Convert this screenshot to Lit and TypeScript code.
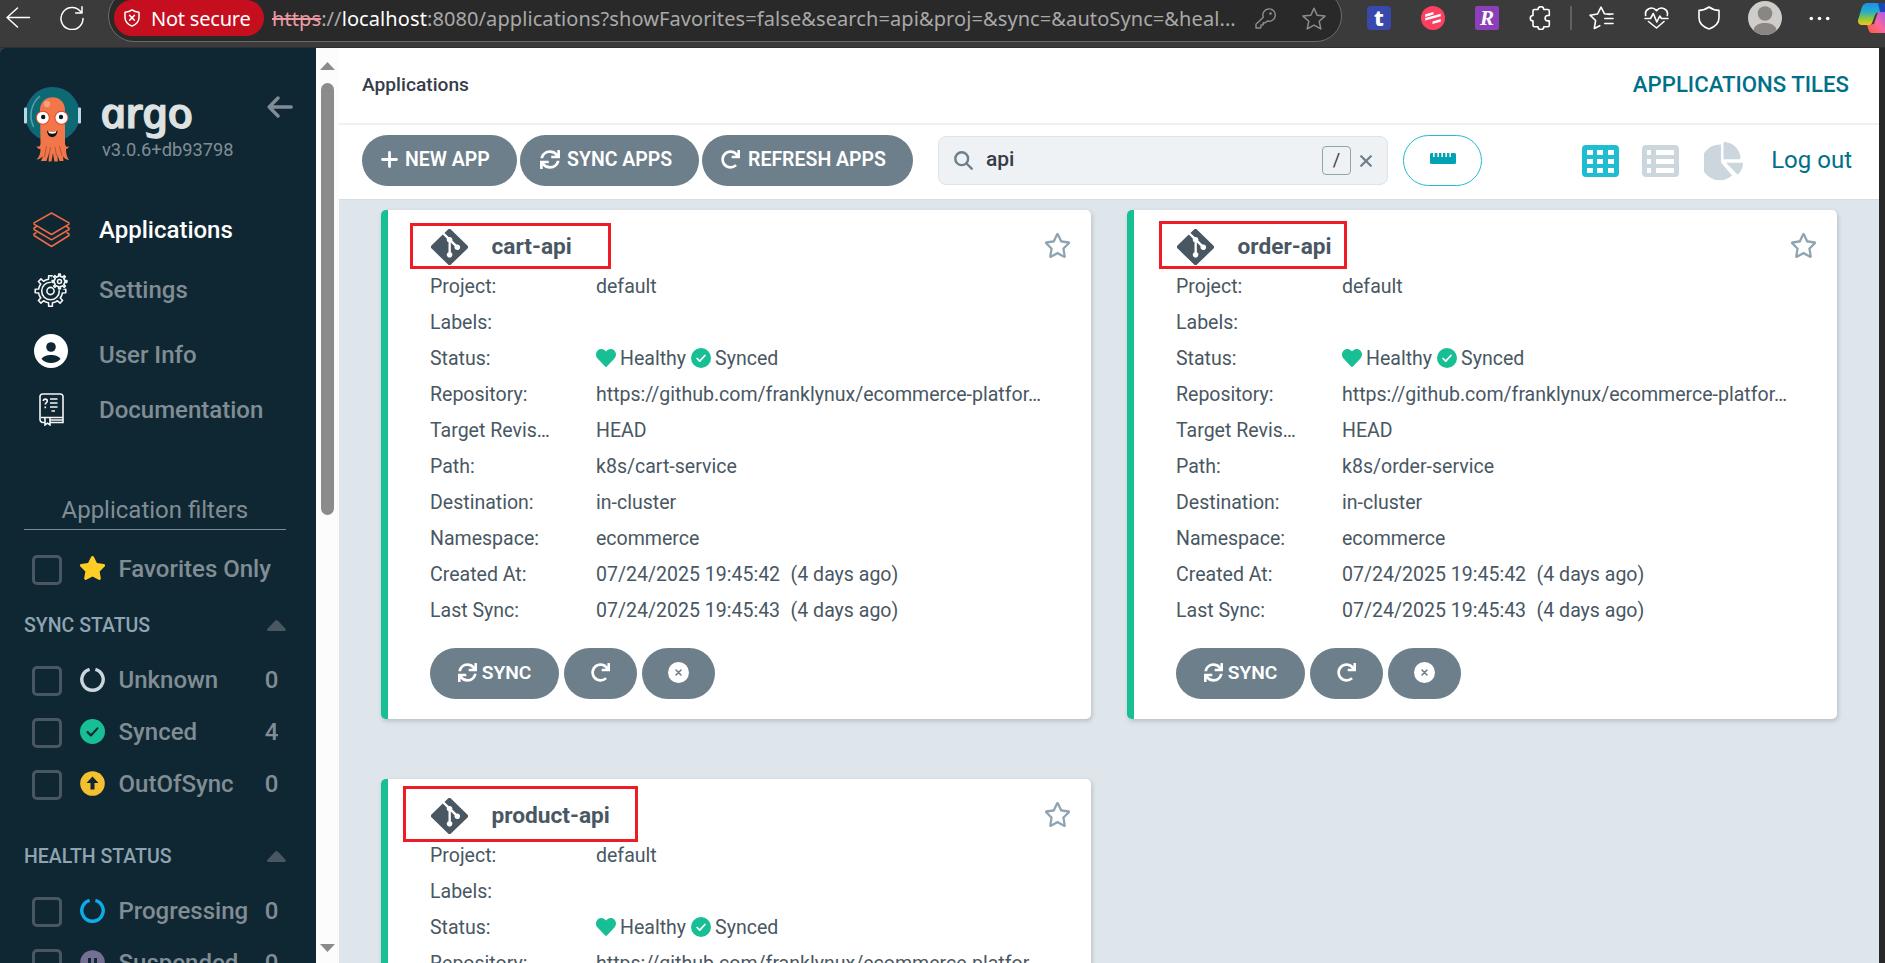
import { LitElement, html, css, nothing } from "lit";
import { customElement, property } from "lit/decorators.js";

const P = {
  sync: "M440.65 12.57l4 82.77A247.16 247.16 0 0 0 255.83 8C134.73 8 33.91 94.92 12.29 209.82A12 12 0 0 0 24.09 224h49.05a12 12 0 0 0 11.67-9.26 175.91 175.91 0 0 1 317-56.94l-101.46-4.86a12 12 0 0 0-12.57 12v47.41a12 12 0 0 0 12 12H500a12 12 0 0 0 12-12V12a12 12 0 0 0-12-12h-47.37a12 12 0 0 0-11.98 12.57zM255.83 432a175.61 175.61 0 0 1-146-77.8l101.8 4.87a12 12 0 0 0 12.57-12v-47.4a12 12 0 0 0-12-12H12a12 12 0 0 0-12 12V500a12 12 0 0 0 12 12h47.35a12 12 0 0 0 12-12.6l-4.15-82.57A247.17 247.17 0 0 0 255.83 504c121.11 0 221.93-86.92 243.55-201.82a12 12 0 0 0-11.8-14.18h-49.05a12 12 0 0 0-11.67 9.26A175.86 175.86 0 0 1 255.83 432z",
  redo: "M500.33 0h-47.41a12 12 0 0 0-12 12.57l4 82.76A247.42 247.42 0 0 0 256 8C119.34 8 7.9 119.53 8 256.19 8.1 393.07 119.1 504 256 504a247.1 247.1 0 0 0 166.18-63.91 12 12 0 0 0 .48-17.43l-34-34a12 12 0 0 0-16.38-.55A176 176 0 1 1 402.1 157.8l-101.53-4.87a12 12 0 0 0-12.57 12v47.41a12 12 0 0 0 12 12h200.33a12 12 0 0 0 12-12V12a12 12 0 0 0-12-12z",
  heart: "M462.3 62.6C407.5 15.9 326 24.3 275.7 76.2L256 96.5l-19.7-20.3C186.1 24.3 104.5 15.9 49.7 62.6c-62.8 53.6-66.1 149.8-9.9 207.9l193.5 199.8c12.5 12.9 32.8 12.9 45.3 0l193.5-199.8c56.3-58.1 53-154.3-9.8-207.9z",
  star: "M259.3 17.8L194 150.2 47.9 171.5c-26.2 3.8-36.7 36.1-17.7 54.6l105.7 103-25 145.5c-4.5 26.3 23.2 46 46.4 33.7L288 439.6l130.7 68.7c23.2 12.2 50.9-7.4 46.4-33.7l-25-145.5 105.7-103c19-18.5 8.5-50.8-17.7-54.6L382 150.2 316.7 17.8c-11.7-23.6-45.6-23.9-57.4 0z",
  starOutline: "M528.1 171.5L382 150.2 316.7 17.8c-11.7-23.6-45.6-23.9-57.4 0L194 150.2 47.9 171.5c-26.2 3.8-36.7 36.1-17.7 54.6l105.7 103-25 145.5c-4.5 26.3 23.2 46 46.4 33.7L288 439.6l130.7 68.7c23.2 12.2 50.9-7.4 46.4-33.7l-25-145.5 105.7-103c19-18.5 8.5-50.8-17.7-54.6zM388.6 312.3l23.7 138.4L288 385.4l-124.3 65.3 23.7-138.4-100.6-98 139-20.2 62.2-126 62.2 126 139 20.2-100.6 98z",
  git: "M439.55 236.05L244 40.45a28.87 28.87 0 0 0-40.81 0l-40.66 40.63 51.52 51.52c27.06-9.14 52.68 16.77 43.39 43.68l49.66 49.66c34.23-11.8 61.18 31 35.47 56.69-26.49 26.49-70.21-2.87-56-37.34L240.22 199v121.85c25.3 12.54 22.26 41.85 9.08 55a34.34 34.34 0 0 1-48.55 0c-17.57-17.6-11.07-46.91 11.25-56v-123c-20.8-8.51-24.6-30.74-18.64-45L142.57 101 8.45 235.14a28.86 28.86 0 0 0 0 40.81l195.61 195.6a28.86 28.86 0 0 0 40.8 0l194.69-194.69a28.86 28.86 0 0 0 0-40.81z",
};

const glyph = (d: string, w: number, h: number, box = "0 0 512 512") =>
  html`<svg width=${w} height=${h} viewBox=${box} preserveAspectRatio="none" fill="currentColor"><path d=${d}></path></svg>`;

const cogTeeth = (cx: number, cy: number, r: number, R: number, n: number) => {
  const pts: string[] = [];
  for (let i = 0; i < n; i++) {
    const a = (i / n) * Math.PI * 2 - Math.PI / 2;
    const s = Math.PI / n;
    for (const [k, rad] of [[-0.85, r], [-0.42, r], [-0.3, R], [0.3, R], [0.42, r], [0.85, r]]) {
      pts.push(`${(cx + Math.cos(a + k * s) * rad).toFixed(2)} ${(cy + Math.sin(a + k * s) * rad).toFixed(2)}`);
    }
  }
  return "M" + pts.join("L") + "z";
};

const checkCircle = (s: number, mark: string) => html`<svg width=${s} height=${s} viewBox="0 0 24 24">
  <circle cx="12" cy="12" r="12" fill="#18be94"></circle>
  <path d="M7.3 12.6l3.2 3.2 6.2-6.8" fill="none" stroke=${mark} stroke-width="2.1" stroke-linecap="round" stroke-linejoin="round"></path></svg>`;

const ring = (c: string) => html`<svg width="25" height="25" viewBox="0 0 25 25" fill="none">
  <path d="M15.4 2.300a10.700 10.700 0 1 1-5.800 0" stroke=${c} stroke-width="3.400" stroke-linecap="butt"></path></svg>`;

@customElement("browser-bar")
class BrowserBar extends LitElement {
  static styles = css`
    :host { display: flex; height: 48px; background: #3b3b3b; color: #fff; align-items: flex-start; overflow: hidden; box-sizing: border-box; border-bottom: 1px solid #312f31; font-family: "Noto Sans", "Open Sans", sans-serif; }
    svg { display: block; flex: none; }
    .back { margin: 7px 0 0 6px; }
    .reload { margin: 6px 0 0 29px; }
    .pill { margin: -10px 0 0 24px; width: 1234px; height: 52px; box-sizing: border-box; border: 1.5px solid #6c6c6c; border-radius: 26px; background: #292929; display: flex; align-items: center; padding: 4px 12px 0 5px; flex: none; }
    .warn { width: 150px; height: 36px; border-radius: 18px; background: #c50f1f; display: flex; align-items: center; padding-left: 10px; box-sizing: border-box; flex: none; }
    .warn span { margin-left: 11px; font-size: 20px; letter-spacing: -0.22px; white-space: nowrap; }
    .url { margin: 0 0 0 8px; width: 968px; font-size: 20px; letter-spacing: 0.09px; color: #a9a9a9; white-space: nowrap; overflow: hidden; flex: none; }
    .url b { font-weight: 400; color: #fff; }
    .url s { color: #ec9aa2; text-decoration-thickness: 2px; }
    .key { margin: 0 0 0 15px; }
    .fav { margin: 0 0 0 26px; }
    .ext { width: 24px; height: 24px; margin-top: 6px; border-radius: 4px; text-align: center; font-weight: 800; flex: none; font-size: 22px; line-height: 22px; }
    .t { background: #3949ab; margin-left: 25px; }
    .r { background: #8b3fb8; margin-left: 30px; border-radius: 2px; font-family: "Liberation Serif", serif; font-style: italic; font-size: 21px; line-height: 24px; }
    .red { margin: 6px 0 0 30px; }
    .puzzle { margin: 6px 0 0 30px; }
    .sep { width: 2px; height: 24px; margin: 6px 0 0 18px; background: #606060; flex: none; }
    .list { margin: 6px 0 0 17px; }
    .heart { margin: 6px 0 0 30px; }
    .shield { margin: 6px 0 0 29px; }
    .avatar { margin: 1px 0 0 28px; }
    .dots { margin: 16px 0 0 27px; }
    .pilot { margin: 3px 0 0 28px; }
  `;
  render() {
    return html`
      <svg class="back" width="25" height="21" viewBox="0 0 25 21" fill="none" stroke="#fff" stroke-width="1.5" stroke-linecap="round"><path d="M23.5 10.5H1M11.5 1L1 10.5l10.500 9.500"></path></svg>
      <svg class="reload" width="24" height="24" viewBox="0 0 24 24" fill="none" stroke="#fff" stroke-width="1.5" stroke-linecap="round"><path d="M22 7V.8M22 7h-6.300M21.500 7A11 11 0 1 0 23 12.500"></path></svg>
      <div class="pill">
        <div class="warn">
          <svg width="16" height="18" viewBox="0 0 16 18" fill="none" stroke="#fff" stroke-width="1.5" stroke-linejoin="round" stroke-linecap="round"><path d="M8 .9c2 1.600 4.300 2.300 7 2.400v5.200c0 4-2.500 6.800-7 8.600-4.500-1.800-7-4.600-7-8.600V3.300C3.700 3.200 6 2.500 8 .9zM5.600 6.400l4.800 4.800M10.400 6.400l-4.800 4.800"></path></svg>
          <span>Not secure</span>
        </div>
        <div class="url"><s>https</s>://<b>localhost</b>:8080/applications?showFavorites=false&amp;search=api&amp;proj=&amp;sync=&amp;autoSync=&amp;heal...</div>
        <svg class="key" width="21" height="21" viewBox="0 0 21 21" fill="none" stroke="#8d8d8d" stroke-width="1.400" stroke-linejoin="round"><path d="M8.300 9.300A6.200 6.200 0 1 1 12.200 13L10.400 14.700H8.200v2.200H6v2.300l-.8.8H1v-3.700z"></path><circle cx="15.500" cy="5.500" r="1.300" fill="#8d8d8d" stroke="none"></circle></svg>
        <svg class="fav" width="24" height="23" viewBox="0 0 24 23" fill="none" stroke="#8d8d8d" stroke-width="1.500" stroke-linejoin="round"><path d="M12 1.200l3.200 7 7.800.9-5.800 5.200 1.600 7.600L12 18.200l-6.800 3.700 1.600-7.600L1 9.100l7.800-.9z"></path></svg>
      </div>
      <div class="ext t">t</div>
      <svg class="red" width="24" height="24" viewBox="0 0 24 24"><circle cx="12" cy="12" r="12" fill="#fd3f62"></circle><path d="M4.200 10.900v-2.600L12.500 6v2.600zM4.200 14.600V12L19.800 7.700v2.600zM11.500 18V15.400l8.300-2.300v2.600z" fill="#fff"></path></svg>
      <div class="ext r">R</div>
      <svg class="puzzle" width="23" height="24" viewBox="0 0 23 24" fill="none" stroke="#fff" stroke-width="1.600" stroke-linejoin="round"><path d="M9 3.500a2.900 2.900 0 0 1 5.800 0h4a1.500 1.500 0 0 1 1.500 1.500v4.500h-1.500a2.700 2.700 0 0 0 0 5.400h1.500v4.300a1.500 1.500 0 0 1-1.500 1.500h-4a2.900 2.900 0 0 1-5.800 0H5.500A1.500 1.500 0 0 1 4 19.200v-4.300a2.700 2.700 0 0 1 0-5.400V5a1.500 1.500 0 0 1 1.500-1.500z"></path></svg>
      <div class="sep"></div>
      <svg class="list" width="25" height="24" viewBox="0 0 25 24" fill="none" stroke="#fff" stroke-width="1.600" stroke-linejoin="round" stroke-linecap="round"><path d="M21 8.500l-5.500-.7L12 1.200 8.600 8 1 9.200l5.600 5.300-1.300 8 5.500-2.800M15.800 12.500H24M15.800 17.500H24M18.500 8H24"></path></svg>
      <svg class="heart" width="25" height="24" viewBox="0 0 25 24" fill="none" stroke="#fff" stroke-width="1.600" stroke-linejoin="round" stroke-linecap="round"><path d="M1.700 9.500C.2 3 8-.5 12.500 4.600 17-.5 24.800 3 23.300 9.500M1 12.500h5.500l2.800-5 3.500 8.500 3-6 1.600 2.500H24M4.500 15.500l8 6.500 7.500-6.500"></path></svg>
      <svg class="shield" width="22" height="24" viewBox="0 0 22 24" fill="none" stroke="#fff" stroke-width="1.600" stroke-linejoin="round"><path d="M11 1c3 2.300 6.200 3.300 10 3.400v7.300c0 5.300-3.500 8.900-10 11.300C4.500 20.600 1 17 1 11.700V4.400C4.800 4.300 8 3.300 11 1z"></path></svg>
      <svg class="avatar" width="34" height="34" viewBox="0 0 34 34"><circle cx="17" cy="17" r="17" fill="#cfcdca"></circle><circle cx="17" cy="12.500" r="7.300" fill="#8a8683"></circle><path d="M5.500 29.500C6 24.500 10.500 22 17 22s11 2.500 11.500 7.500A17 17 0 0 1 5.500 29.500z" fill="#8a8683"></path></svg>
      <svg class="dots" width="21" height="5" viewBox="0 0 21 5" fill="#fff"><circle cx="2.300" cy="2.500" r="1.800"></circle><circle cx="10.500" cy="2.500" r="1.800"></circle><circle cx="18.700" cy="2.500" r="1.800"></circle></svg>
      <svg class="pilot" width="36" height="31" viewBox="0 0 36 31">
        <defs><linearGradient id="a" x1="0" y1="0" x2="0" y2="1"><stop offset="0" stop-color="#1f8fe8"></stop><stop offset=".4" stop-color="#22b0c8"></stop><stop offset=".7" stop-color="#8cc63f"></stop><stop offset="1" stop-color="#f6c416"></stop></linearGradient>
        <linearGradient id="b" x1="0" y1="1" x2="1" y2="0"><stop offset="0" stop-color="#ff5a2b"></stop><stop offset=".5" stop-color="#f768a0"></stop><stop offset="1" stop-color="#a855f7"></stop></linearGradient></defs>
        <path d="M9 22l2 6a3 3 0 0 0 3 2h14V8l-8 1-4 12z" fill="url(#b)"></path>
        <path d="M19 0h7l3 9h-7a5 5 0 0 0-5 3l-3 8a3 3 0 0 1-3 2H4a4 4 0 0 1-4-5L4 4a6 6 0 0 1 5-4z" fill="url(#a)"></path>
        <path d="M20 0h6l3 9h-7z" fill="#1849b8"></path>
      </svg>`;
  }
}

@customElement("side-nav")
class SideNav extends LitElement {
  static styles = css`
    :host { display: block; width: 316px; height: 915px; flex: none; background: #0f2733; color: #818d94; box-sizing: border-box; padding: 38px 30px 0 24px; overflow: hidden; border-top-left-radius: 6px; font-weight: 500; font-size: 24px; white-space: nowrap; }
    svg { display: block; flex: none; }
    .brand { display: flex; height: 114px; align-items: flex-start; }
    .words { margin-left: 20px; width: 133px; }
    .argo { font: italic 500 42px/50px "Noto Sans", sans-serif; letter-spacing: -1px; color: #dee2e1; -webkit-text-stroke: 1.2px #dee2e1; height: 50px; margin-top: 1px; transform: scaleX(1.08) skewX(12deg); transform-origin: 0 38px; }
    .ver { font-size: 18.3px; font-weight: 400; line-height: 25px; }
    .collapse { margin: 10px 0 0 33px; }
    .item { display: grid; grid-template-columns: 75px auto; align-items: center; }
    .ic { display: flex; justify-content: center; width: 37px; }
    .ic svg { margin-left: 17px; }
    .r60 { height: 60px; }
    .r69 { height: 69px; }
    .r69 .ic { margin-bottom: 8px; }
    .r41 { height: 41px; }
    .on { color: #fff; }
    .title { margin-top: 59px; height: 40px; line-height: 42px; padding-left: 37.500px; border-bottom: 1px solid #7d8b93; font-weight: 400; }
    .row { display: flex; align-items: center; height: 52px; padding: 0 8px; }
    .box { width: 30px; height: 30px; box-sizing: border-box; border: 3px solid #495763; border-radius: 5px; margin-right: 18px; flex: none; }
    .row .m { width: 25px; margin: 0 13.500px 4px 0; }
    .row .n { flex: 1; margin-bottom: 3px; }
    .row .c { margin-bottom: 3px; margin-right: -.5px; }
    .first { margin-top: 14px; }
    .head { display: flex; justify-content: space-between; align-items: center; height: 30px; font-size: 19.5px; color: #8fa4b1; }
    .head span { margin-top: 1px; }
    .h1 { margin: 14px 0 15px; }
    .h2 { margin: 30px 0 15px; }
  `;
  row(icon: unknown, name: string, count?: number) {
    return html`<div class="row ${count === undefined ? "first" : ""}"><span class="box"></span><span class="m">${icon}</span><span class="n">${name}</span>${count === undefined ? nothing : html`<span class="c">${count}</span>`}</div>`;
  }
  head(name: string, cls: string) {
    return html`<div class="head ${cls}"><span>${name}</span><svg width="19" height="11" viewBox="0 0 19 11" fill="#495763"><path d="M8.300.6a1.700 1.700 0 0 1 2.400 0l7.800 8.200c.9 1 .3 2.200-.9 2.200H1.400C.2 11-.4 9.800.5 8.800z"></path></svg></div>`;
  }
  render() {
    return html`
      <div class="brand">
        <svg width="58" height="77" viewBox="0 0 58 77">
          <circle cx="28.500" cy="28.500" r="26.800" fill="#0b6a74" stroke="#1f5f7c" stroke-width="1.200"></circle>
          <rect x="0" y="21.500" width="3" height="16" rx="1" fill="#b9d6ea"></rect><rect x="54" y="21.500" width="3" height="16" rx="1" fill="#b9d6ea"></rect>
          <path d="M15.500 10.500C7 18 4.500 30 9.500 40.500" fill="none" stroke="#5fa0a6" stroke-width="1.500" stroke-linecap="round"></path>
          <path d="M16 24c0-17 25-17 25 0v34c1.500 4 2.500 3 4 2-.5 2-1.500 3-3 3 0 5 1 8 3 11-3-.3-5-2-6-4l.5 5h-4l-2-6 .3 6.500h-3.500L29 67l-1.500 8.500h-3L25 67l-2.500 8H17l2-5c-2 2.500-4.500 3.500-6.500 3.500 3-3 4-6 4-10.500-2 .3-3.500-1-4-3 2 1 3.500 1 4-2z" fill="#f1764a"></path>
          <path d="M22.500 60l-2 11M26.500 61l-1.500 9M31 61l1.500 9M35.500 60l2.500 10" stroke="#b94c30" stroke-width=".9" fill="none"></path>
          <ellipse cx="23" cy="18" rx="3" ry="3.200" fill="#f9a183"></ellipse>
          <circle cx="18.800" cy="31.700" r="7" fill="#e3472b"></circle><circle cx="37.500" cy="31.700" r="7" fill="#e3472b"></circle>
          <circle cx="18.800" cy="31.700" r="6" fill="#fff"></circle><circle cx="37.500" cy="31.700" r="6" fill="#fff"></circle>
          <circle cx="19.200" cy="31" r="2.200" fill="#101820"></circle><circle cx="37" cy="31" r="2.200" fill="#101820"></circle>
          <path d="M23 44.500c3.300 2.200 7.500 2.200 10.500 0-.3 4.500-2.500 6.500-5.300 6.500S23.300 49 23 44.500z" fill="#131313"></path><path d="M24.300 45.100c2.800 1.200 5.500 1.200 8 0l-.6 2c-2.200.9-4.800.9-6.800 0z" fill="#fff"></path>
        </svg>
        <div class="words"><div class="argo">argo</div><div class="ver">v3.0.6+db93798</div></div>
        <svg class="collapse" width="26" height="22" viewBox="0 0 26 22" fill="none" stroke="#818d94" stroke-width="3.400" stroke-linecap="round" stroke-linejoin="round"><path d="M24.200 11H2.200M11 2L2.200 11l8.800 9"></path></svg>
      </div>
      <div class="item r60 on"><span class="ic"><svg width="37" height="36" viewBox="0 0 37 36" fill="none" stroke="#ef6b43" stroke-width="1.500" stroke-linejoin="round"><path d="M18.500 1L36 10.800v1.400L18.500 22.500 1 12.200v-1.400zM3.500 14.500L1 16v1.500l17.500 10.300L36 17.500V16l-2.500-1.500M3.500 20.500L1 22v1.500L18.500 34.500 36 23.500V22l-2.500-1.500"></path></svg></span><span>Applications</span></div>
      <div class="item r60"><span class="ic"><svg width="34" height="34" viewBox="0 0 34 34" fill="none" stroke="#f4f6f7" stroke-width="1.600" stroke-linejoin="round"><path d=${cogTeeth(16.5, 18, 12, 15.400, 8)}></path><circle cx="16.500" cy="18" r="8.800"></circle><circle cx="16.500" cy="18" r="3.600"></circle><circle cx="25.500" cy="8.500" r="8.800" fill="#0f2733" stroke="none"></circle><path d=${cogTeeth(25.5, 8.5, 5.2, 7.4, 8)}></path><circle cx="25.500" cy="8.500" r="2"></circle></svg></span><span>Settings</span></div>
      <div class="item r69"><span class="ic"><svg width="34" height="34" viewBox="0 0 34 34"><circle cx="17" cy="17" r="17" fill="#fff"></circle><circle cx="17" cy="13" r="4.800" fill="#0f2733"></circle><path d="M7.500 25c3-5.300 16-5.300 19 0-4.500 5.300-14.500 5.300-19 0z" fill="#0f2733"></path></svg></span><span>User Info</span></div>
      <div class="item r41"><span class="ic"><svg width="25" height="33" viewBox="0 0 25 33" fill="none" stroke="#f4f6f7" stroke-width="1.600"><path d="M6 29.500H4a3 3 0 0 1-3-3V3.500A2.500 2.500 0 0 1 3.500 1h18A2.500 2.500 0 0 1 24 3.500V29.500H11M2 24.500h22M11 27h13M6 25v7l2.500-1.800L11 32v-7M11 6h7.500M11 10h7.500M11 14h7.500M12.500 18H16M4.300 8c.2-2.500 4-2.500 4 0 0 1.700-2 1.700-2 3.500M6.300 13.500v1.800"></path></svg></span><span>Documentation</span></div>
      <div class="title">Application filters</div>
      ${this.row(html`<svg width="25" height="24" viewBox="22 0 532 512" preserveAspectRatio="none" fill="#ffce25"><path d=${P.star}></path></svg>`, "Favorites Only")}
      ${this.head("SYNC STATUS", "h1")}
      ${this.row(ring("#ccd6dd"), "Unknown", 0)}
      ${this.row(checkCircle(25, "#0f2733"), "Synced", 4)}
      ${this.row(html`<svg width="25" height="25" viewBox="0 0 25 25"><circle cx="12.500" cy="12.500" r="12.300" fill="#f4c030"></circle><path d="M12.500 5.500l6 6.500h-4v6.500h-4V12h-4z" fill="#0f2733"></path></svg>`, "OutOfSync", 0)}
      ${this.head("HEALTH STATUS", "h2")}
      ${this.row(ring("#0dadea"), "Progressing", 0)}
      ${this.row(html`<svg width="25" height="25" viewBox="0 0 25 25"><circle cx="12.500" cy="12.500" r="12.300" fill="#766f94"></circle><path d="M8 8h3v9H8zM14 8h3v9h-3z" fill="#0f2733"></path></svg>`, "Suspended", 0)}
    `;
  }
}

@customElement("app-tile")
class AppTile extends LitElement {
  @property() name = "";
  @property() path = "";
  @property() mark = "";
  static styles = css`
    :host { display: block; position: relative; height: 509px; box-sizing: border-box; background: #fff; border-left: 7px solid #18be94; border-radius: 5px; box-shadow: 1px 2px 4px rgba(60, 80, 90, .25); padding: 18px 21px 0 42px; font-size: 19.55px; color: #495763; white-space: nowrap; }
    svg { display: block; flex: none; }
    .top { display: flex; align-items: center; height: 37px; padding-left: 1px; }
    .name { margin-left: 23.500px; font-size: 22.7px; font-weight: 700; flex: 1; }
    .fav { color: #8fa4b1; margin-bottom: 2px; }
    .info { display: grid; grid-template-columns: 166px 1fr; grid-auto-rows: 36px; align-items: center; margin-top: 3px; }
    .info span { min-width: 0; }
    .status { display: flex; align-items: center; }
    .status .h { margin-right: 4px; color: #18be94; }
    .status .s { margin: 0 4px 0 5px; }
    .ago { margin-left: 10.500px; }
    .btns { display: flex; gap: 5px; margin-top: 20px; font-size: 19.2px; }
    .btn { height: 51px; width: 73px; border-radius: 25.500px; background: #6d7f8b; color: #fff; display: flex; align-items: center; justify-content: center; font-weight: 600; padding-bottom: 3px; box-sizing: border-box; }
    .wide { width: 129px; gap: 5px; }
    .mark { position: absolute; box-sizing: border-box; border: 3px solid #ee1c25; }
    .cart { left: 22px; top: 13px; width: 201px; height: 46px; }
    .order { left: 25px; top: 11px; width: 188px; height: 48px; }
    .product { left: 15px; top: 7px; width: 235px; height: 56px; }
  `;
  render() {
    const f = (k: string, v: unknown) => html`<span>${k}</span><span>${v}</span>`;
    return html`
      <div class="top">
        ${glyph(P.git, 37, 36, "0 32 448 448")}
        <span class="name">${this.name}</span>
        <span class="fav">${glyph(P.starOutline, 25, 25, "22 0 532 512")}</span>
      </div>
      <div class="info">
        ${f("Project:", "default")}
        ${f("Labels:", "")}
        ${f("Status:", html`<span class="status"><span class="h">${glyph(P.heart, 20, 18, "0 32 512 448")}</span>Healthy<span class="s">${checkCircle(20, "#fff")}</span>Synced</span>`)}
        ${f("Repository:", "https://github.com/franklynux/ecommerce-platfor…")}
        ${f("Target Revis…", "HEAD")}
        ${f("Path:", this.path)}
        ${f("Destination:", "in-cluster")}
        ${f("Namespace:", "ecommerce")}
        ${f("Created At:", html`07/24/2025 19:45:42<span class="ago">(4 days ago)</span>`)}
        ${f("Last Sync:", html`07/24/2025 19:45:43<span class="ago">(4 days ago)</span>`)}
      </div>
      <div class="btns">
        <div class="btn wide">${glyph(P.sync, 19, 19)}SYNC</div>
        <div class="btn">${glyph(P.redo, 19, 19)}</div>
        <div class="btn"><svg width="21" height="21" viewBox="0 0 21 21"><circle cx="10.500" cy="10.500" r="10.500" fill="#fff"></circle><path d="M8 8l5 5M13 8l-5 5" stroke="#6d7f8b" stroke-width="1.600" stroke-linecap="round"></path></svg></div>
      </div>
      <div class="mark ${this.mark}"></div>`;
  }
}

@customElement("app-root")
class AppRoot extends LitElement {
  static styles = css`
    :host { display: block; height: 963px; overflow: hidden; background: #3b3b3b; font-family: Roboto, sans-serif; }
    svg { display: block; flex: none; }
    .page { display: flex; height: 915px; overflow: hidden; }
    .scroll { width: 23px; flex: none; background: #fcfcfc; display: flex; flex-direction: column; align-items: center; padding: 14px 0 11px; box-sizing: border-box; }
    .thumb { width: 13px; height: 432px; border-radius: 7px; background: #8b8b8b; margin: 13px 0 auto; }
    .main { width: 1540px; flex: none; display: flex; flex-direction: column; background: #dee5eb; }
    .edge { flex: 1; background: #292829; }
    .crumbs { height: 77px; box-sizing: border-box; background: #fff; border-bottom: 2px solid #edf1f5; display: flex; justify-content: space-between; align-items: center; padding: 0 30px 3px 23px; font-size: 19.200px; font-weight: 500; color: #363c4a; flex: none; }
    .view { color: #00708a; font-size: 22.200px; }
    .tools { height: 74px; box-sizing: border-box; background: #fff; display: flex; align-items: center; padding: 0 27px 3px 23px; flex: none; }
    .btn { height: 51px; box-sizing: border-box; border-radius: 25.500px; background: #6d7f8b; color: #fff; display: flex; align-items: center; padding: 0 0 3px 19px; font-size: 19.500px; font-weight: 600; gap: 8px; margin-right: 3px; flex: none; white-space: nowrap; }
    .b1 { width: 155px; gap: 7px; } .b2 { width: 179px; gap: 7px; padding-left: 20px; } .b3 { width: 211px; }
    .search { width: 450px; height: 49px; margin-left: 22px; box-sizing: border-box; border: 1px solid #dde4ea; border-radius: 8px; background: #eef2f5; display: flex; align-items: center; padding: 0 15px 0 15px; color: #363c4a; font-size: 21px; flex: none; }
    .q { flex: 1; margin: 0 0 4px 13px; font-weight: 500; }
    .slash { width: 29px; height: 29px; box-sizing: border-box; border: 1.500px solid #8fa4b1; border-radius: 4px; text-align: center; line-height: 26px; font-size: 18px; margin-right: 9px; }
    .ruler { width: 79px; height: 51px; margin-left: 15px; box-sizing: border-box; border: 1.500px solid #1fbdd0; border-radius: 26px; display: flex; align-items: center; justify-content: center; padding-bottom: 5px; flex: none; }
    .grid { margin-left: auto; }
    .list { margin-left: 23px; }
    .pie { margin-left: 25px; }
    .out { margin-left: 28px; font-size: 24px; color: #00708a; white-space: nowrap; line-height: 28px; margin-bottom: 1px; }
    .tiles { border-top: 1px solid #d5dde3; padding: 10px 42px 0; display: grid; grid-template-columns: 710px 710px; column-gap: 36px; row-gap: 60px; flex: 1; min-height: 0; overflow: hidden; align-content: start; }
  `;
  render() {
    return html`
      <browser-bar></browser-bar>
      <div class="page">
        <side-nav></side-nav>
        <div class="scroll">
          <svg width="15" height="8" viewBox="0 0 15 8" fill="#8b8b8b"><path d="M7.500 0L15 8H0z"></path></svg>
          <div class="thumb"></div>
          <svg width="15" height="8" viewBox="0 0 15 8" fill="#8b8b8b"><path d="M7.500 8L0 0h15z"></path></svg>
        </div>
        <div class="main">
          <div class="crumbs"><span>Applications</span><span class="view">APPLICATIONS TILES</span></div>
          <div class="tools">
            <div class="btn b1"><svg width="17" height="17" viewBox="0 0 17 17" stroke="#fff" stroke-width="2.800" stroke-linecap="round"><path d="M8.500 1.500v14M1.500 8.500h14"></path></svg>NEW APP</div>
            <div class="btn b2">${glyph(P.sync, 20, 19)}SYNC APPS</div>
            <div class="btn b3">${glyph(P.redo, 19, 19)}REFRESH APPS</div>
            <div class="search">
              <svg width="19" height="19" viewBox="0 0 19 19" fill="none" stroke="#6d7f8b" stroke-width="2.400" stroke-linecap="round"><circle cx="7.700" cy="7.700" r="6.400"></circle><path d="M12.500 12.500l5.200 5.200"></path></svg>
              <span class="q">api</span><span class="slash">/</span>
              <svg width="12" height="12" viewBox="0 0 12 12" stroke="#6d7f8b" stroke-width="2.200" stroke-linecap="round"><path d="M1.200 1.200l9.600 9.600M10.800 1.200l-9.600 9.600"></path></svg>
            </div>
            <div class="ruler"><svg width="26" height="11" viewBox="0 0 26 11"><path d="M1.500 0H3v4h1.600V0h2.800v4H9V0h2.400v4H13V0h2.400v4H17V0h2.400v4H21V0h3.500A1.500 1.500 0 0 1 26 1.500v8a1.500 1.500 0 0 1-1.500 1.500h-23A1.500 1.500 0 0 1 0 9.500v-8A1.500 1.500 0 0 1 1.500 0z" fill="#00a2b3"></path></svg></div>
            <svg class="grid" width="37" height="32" viewBox="0 0 37 32"><rect width="37" height="32" rx="4" fill="#1fbdd0"></rect><path d="M5 5h6v5H5zM15 5h6v5h-6zM26 5h6v5h-6zM5 14h6v5H5zM15 14h6v5h-6zM26 14h6v5h-6zM5 23h6v5H5zM15 23h6v5h-6zM26 23h6v5h-6z" fill="#fff"></path></svg>
            <svg class="list" width="37" height="32" viewBox="0 0 37 32"><rect width="37" height="32" rx="4" fill="#ccd6dd"></rect><path d="M5 5h4v5H5zM14 5h18v5H14zM5 14h4v5H5zM14 14h18v5H14zM5 23h4v5H5zM14 23h18v5H14z" fill="#fff"></path></svg>
            <svg class="pie" width="39" height="38" viewBox="0 0 39 38" fill="#ccd6dd"><path d="M17 2.500V20.500L28 33.500A18 18 0 1 1 17 2.500zM19.500 1.200A1.200 1.200 0 0 1 20.800 0 17 17 0 0 1 36.500 16a1.200 1.200 0 0 1-1.200 1.300H19.500zM22 20.800H37.700A1.200 1.200 0 0 1 39 22.200a17 17 0 0 1-4.500 9.600 1.200 1.200 0 0 1-1.800 0z"></path></svg>
            <span class="out">Log out</span>
          </div>
          <div class="tiles">
            <app-tile name="cart-api" path="k8s/cart-service" mark="cart"></app-tile>
            <app-tile name="order-api" path="k8s/order-service" mark="order"></app-tile>
            <app-tile name="product-api" path="k8s/product-service" mark="product"></app-tile>
          </div>
        </div>
        <div class="edge"></div>
      </div>`;
  }
}
